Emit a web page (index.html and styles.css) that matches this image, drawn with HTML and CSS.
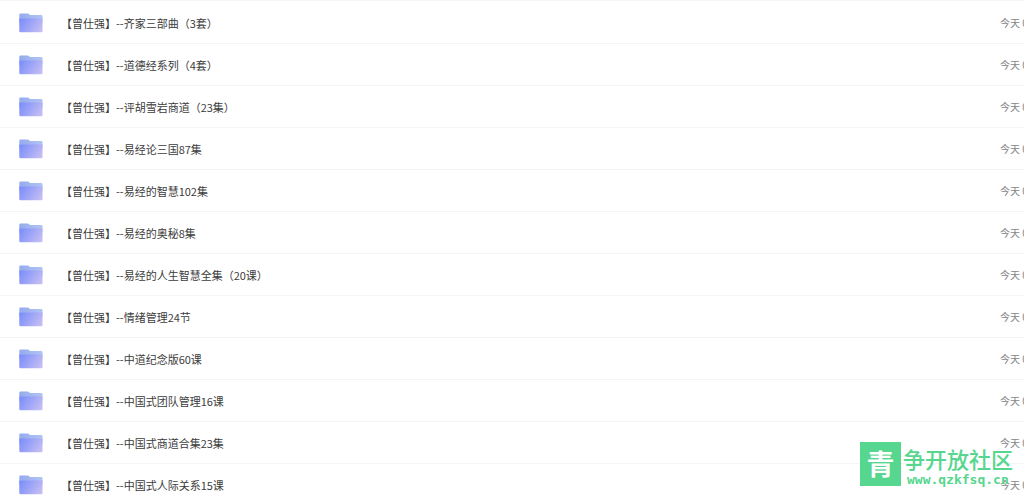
FILE: index.html
```html
<!doctype html>
<html lang="zh-CN">
<head>
	<meta charset="utf-8">
	<title>曾仕强</title>
	<link rel="stylesheet" href="styles.css">
</head>
<body>
	<svg class="defs" width="0" height="0" aria-hidden="true">
		<defs>
			<linearGradient id="front" x1="0" y1="0.3" x2="1" y2="0.7">
				<stop offset="0" stop-color="#7f90fa"/>
				<stop offset="1" stop-color="#c3bdf3"/>
			</linearGradient>
			<linearGradient id="back" x1="0" y1="0" x2="1" y2="0">
				<stop offset="0" stop-color="#93abed"/>
				<stop offset="1" stop-color="#b3c3f5"/>
			</linearGradient>
		</defs>
		<symbol id="folder" viewBox="0 0 24 20">
			<path fill="url(#back)" d="M1.500 0.500H8.500Q9.500 0.500 10.200 1.200L11 2H22.500Q23.500 2 23.500 3V10H0.300V1.700Q0.300 0.500 1.500 0.500Z"/>
			<path fill="url(#front)" d="M0.300 5.500H23.500V18Q23.500 19.300 22.300 19.300H1.500Q0.300 19.300 0.300 18Z"/>
		</symbol>
	</svg>

	<ul class="files">
		<li><svg class="icon"><use href="#folder"/></svg><a class="name" href="#">【曾仕强】--齐家三部曲（3套）</a><span class="date">今天 0</span></li>
		<li><svg class="icon"><use href="#folder"/></svg><a class="name" href="#">【曾仕强】--道德经系列（4套）</a><span class="date">今天 0</span></li>
		<li><svg class="icon"><use href="#folder"/></svg><a class="name" href="#">【曾仕强】--评胡雪岩商道（23集）</a><span class="date">今天 0</span></li>
		<li><svg class="icon"><use href="#folder"/></svg><a class="name" href="#">【曾仕强】--易经论三国87集</a><span class="date">今天 0</span></li>
		<li><svg class="icon"><use href="#folder"/></svg><a class="name" href="#">【曾仕强】--易经的智慧102集</a><span class="date">今天 0</span></li>
		<li><svg class="icon"><use href="#folder"/></svg><a class="name" href="#">【曾仕强】--易经的奥秘8集</a><span class="date">今天 0</span></li>
		<li><svg class="icon"><use href="#folder"/></svg><a class="name" href="#">【曾仕强】--易经的人生智慧全集（20课）</a><span class="date">今天 0</span></li>
		<li><svg class="icon"><use href="#folder"/></svg><a class="name" href="#">【曾仕强】--情绪管理24节</a><span class="date">今天 0</span></li>
		<li><svg class="icon"><use href="#folder"/></svg><a class="name" href="#">【曾仕强】--中道纪念版60课</a><span class="date">今天 0</span></li>
		<li><svg class="icon"><use href="#folder"/></svg><a class="name" href="#">【曾仕强】--中国式团队管理16课</a><span class="date">今天 0</span></li>
		<li><svg class="icon"><use href="#folder"/></svg><a class="name" href="#">【曾仕强】--中国式商道合集23集</a><span class="date">今天 0</span></li>
		<li><svg class="icon"><use href="#folder"/></svg><a class="name" href="#">【曾仕强】--中国式人际关系15课</a><span class="date">今天 0</span></li>
	</ul>

	<div class="watermark">
		<span class="mark">青</span>
		<div class="words">
			<div class="site">争开放社区</div>
			<div class="url">www.qzkfsq.cn</div>
		</div>
	</div>
</body>
</html>
```
FILE: styles.css
```css
body {
	margin: 0;
	height: 100vh;
	overflow: hidden;
	position: relative;
	background: #fff;
	font-family: "Noto Sans CJK SC", sans-serif;
}

.defs {
	position: absolute;
}

.files {
	margin: 0;
	padding: 1px 0 0;
	list-style: none;
	border-top: 1px solid #f5f5f7;
}

.files li {
	display: flex;
	align-items: center;
	box-sizing: border-box;
	height: 42px;
	padding-left: 19px;
	border-bottom: 1px solid #f3f4f6;
}

.icon {
	width: 24px;
	height: 20px;
	margin-right: 18px;
	flex: none;
}

.name {
	flex: 1;
	color: #3c3c3c;
	font-size: 11px;
	line-height: 16px;
	text-decoration: none;
	white-space: nowrap;
}

.date {
	width: 24px;
	overflow: hidden;
	color: #858585;
	font-size: 10px;
	line-height: 16px;
	white-space: nowrap;
}

/************** Watermark ******************/
.watermark {
	position: absolute;
	right: 11px;
	bottom: 14px;
	display: flex;
	align-items: center;
	gap: 2px;
	color: #56d68e;
}

.mark {
	width: 41px;
	height: 44px;
	background: #56d68e;
	color: #fff;
	font-size: 28px;
	font-weight: bold;
	line-height: 42px;
	text-align: center;
}

.site {
	font-size: 22px;
	font-weight: 500;
	line-height: 32px;
}

.url {
	padding-left: 4px;
	font-family: "DejaVu Sans Mono", monospace;
	font-size: 13px;
	font-weight: bold;
	line-height: 12px;
}
```
